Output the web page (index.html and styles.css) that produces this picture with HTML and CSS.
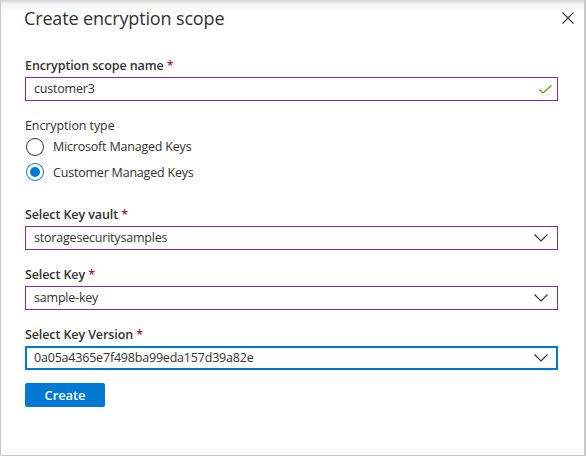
FILE: index.html
```html
<!DOCTYPE html>
<html>
<head>
<meta charset="utf-8">
<link rel="stylesheet" href="styles.css">
</head>
<body>
<div class="panel">
  <div class="header">
    <h1 class="title">Create encryption scope</h1>
    <button class="close" aria-label="Close">
      <svg width="12" height="12" viewBox="0 0 12 12"><path d="M0.5 0.5 L11.5 11.5 M11.5 0.5 L0.5 11.5" stroke="#323130" stroke-width="1.1" fill="none"/></svg>
    </button>
  </div>
  <form class="form">
    <div class="field">
      <label class="label">Encryption scope name <span class="req">*</span></label>
      <div class="input dirty">
        <span class="value">customer3</span>
        <svg class="check" width="13" height="9" viewBox="0 0 13 9"><path d="M0.5 4.5 L4 8 L12.5 0.5" stroke="#57a300" stroke-width="1.2" fill="none"/></svg>
      </div>
    </div>
    <div class="group">
      <div class="label plain">Encryption type</div>
      <div class="radio"><span class="circle"></span><span>Microsoft Managed Keys</span></div>
      <div class="radio"><span class="circle on"></span><span>Customer Managed Keys</span></div>
    </div>
    <div class="field">
      <label class="label">Select Key vault <span class="req">*</span></label>
      <div class="input dirty">
        <span class="value">storagesecuritysamples</span>
        <svg class="chev" width="14" height="8" viewBox="0 0 14 8"><path d="M0.5 0.5 L7 7 L13.5 0.5" stroke="#323130" stroke-width="1.1" fill="none"/></svg>
      </div>
    </div>
    <div class="field">
      <label class="label">Select Key <span class="req">*</span></label>
      <div class="input dirty">
        <span class="value">sample-key</span>
        <svg class="chev" width="14" height="8" viewBox="0 0 14 8"><path d="M0.5 0.5 L7 7 L13.5 0.5" stroke="#323130" stroke-width="1.1" fill="none"/></svg>
      </div>
    </div>
    <div class="field">
      <label class="label">Select Key Version <span class="req">*</span></label>
      <div class="input focus">
        <span class="value">0a05a4365e7f498ba99eda157d39a82e</span>
        <svg class="chev" width="14" height="8" viewBox="0 0 14 8"><path d="M0.5 0.5 L7 7 L13.5 0.5" stroke="#323130" stroke-width="1.1" fill="none"/></svg>
      </div>
    </div>
    <div class="actions">
      <button type="button" class="primary">Create</button>
    </div>
  </form>
</div>
</body>
</html>
```

FILE: styles.css
```css
* { box-sizing: border-box; }
html, body { margin: 0; padding: 0; background: #fff; }
body {
  font-family: "Segoe UI", "Open Sans", "Noto Sans", sans-serif;
  color: #323130;
  font-size: 12.5px;
  letter-spacing: -0.2px;
}
.panel {
  width: 586px;
  height: 456px;
  border-left: 1px solid #c8c8c8;
  border-right: 2px solid #c8c8c8;
  border-bottom: 1px solid #c8c8c8;
  background: linear-gradient(to bottom, #d4d4d4 0px, #f2f2f2 4px, #fcfcfc 10px, #fff 16px);
}
.header {
  display: flex;
  align-items: flex-start;
  justify-content: space-between;
  padding: 5px 10px 0 23px;
  height: 56px;
}
.title {
  margin: 0;
  font-size: 18px;
  font-weight: 400;
  line-height: 26px;
  letter-spacing: -0.15px;
  color: #323130;
}
.close {
  border: none;
  background: none;
  padding: 0;
  margin-top: 7px;
  width: 12px;
  height: 12px;
  display: flex;
}
.form {
  padding: 0 26px 0 24px;
  display: flex;
  flex-direction: column;
}
.field { display: flex; flex-direction: column; margin-bottom: 15px; }
.label {
  display: block;
  font-weight: 600;
  line-height: 18px;
  padding-top: 1px;
  margin-bottom: 2px;
  letter-spacing: -0.1px;
}
.label.plain { font-weight: 400; margin-bottom: 0; padding-top: 1px; line-height: 17px; }
.req { color: #a4262c; }
.input {
  height: 24px;
  border: 1px solid #8a2da5;
  display: flex;
  align-items: center;
  justify-content: space-between;
  padding: 0 8px 0 8px;
  background: #fff;
}
.input.focus { border: 2px solid #0078d4; padding: 0 7px 0 7px; }
.value { line-height: 18px; }
.check { margin-right: -3px; }
.chev { margin-right: 1px; }
.group { margin-bottom: 20px; }
.radio {
  display: flex;
  align-items: center;
  gap: 9px;
  height: 25px;
  padding-left: 1px;
}
.radio + .radio { height: 26px; }
.circle {
  width: 18px;
  height: 18px;
  border: 1px solid #323130;
  border-radius: 50%;
  display: flex;
  align-items: center;
  justify-content: center;
  flex: none;
}
.circle.on { border-color: #0078d4; }
.circle.on::after {
  content: "";
  width: 10px;
  height: 10px;
  border-radius: 50%;
  background: #0078d4;
}
.actions { margin-top: -2px; }
.primary {
  width: 80px;
  height: 24px;
  border: none;
  border-radius: 2px;
  background: #0078d4;
  color: #fff;
  font-family: inherit;
  font-size: 13px;
  font-weight: 600;
  letter-spacing: -0.1px;
  padding: 0;
}
```
